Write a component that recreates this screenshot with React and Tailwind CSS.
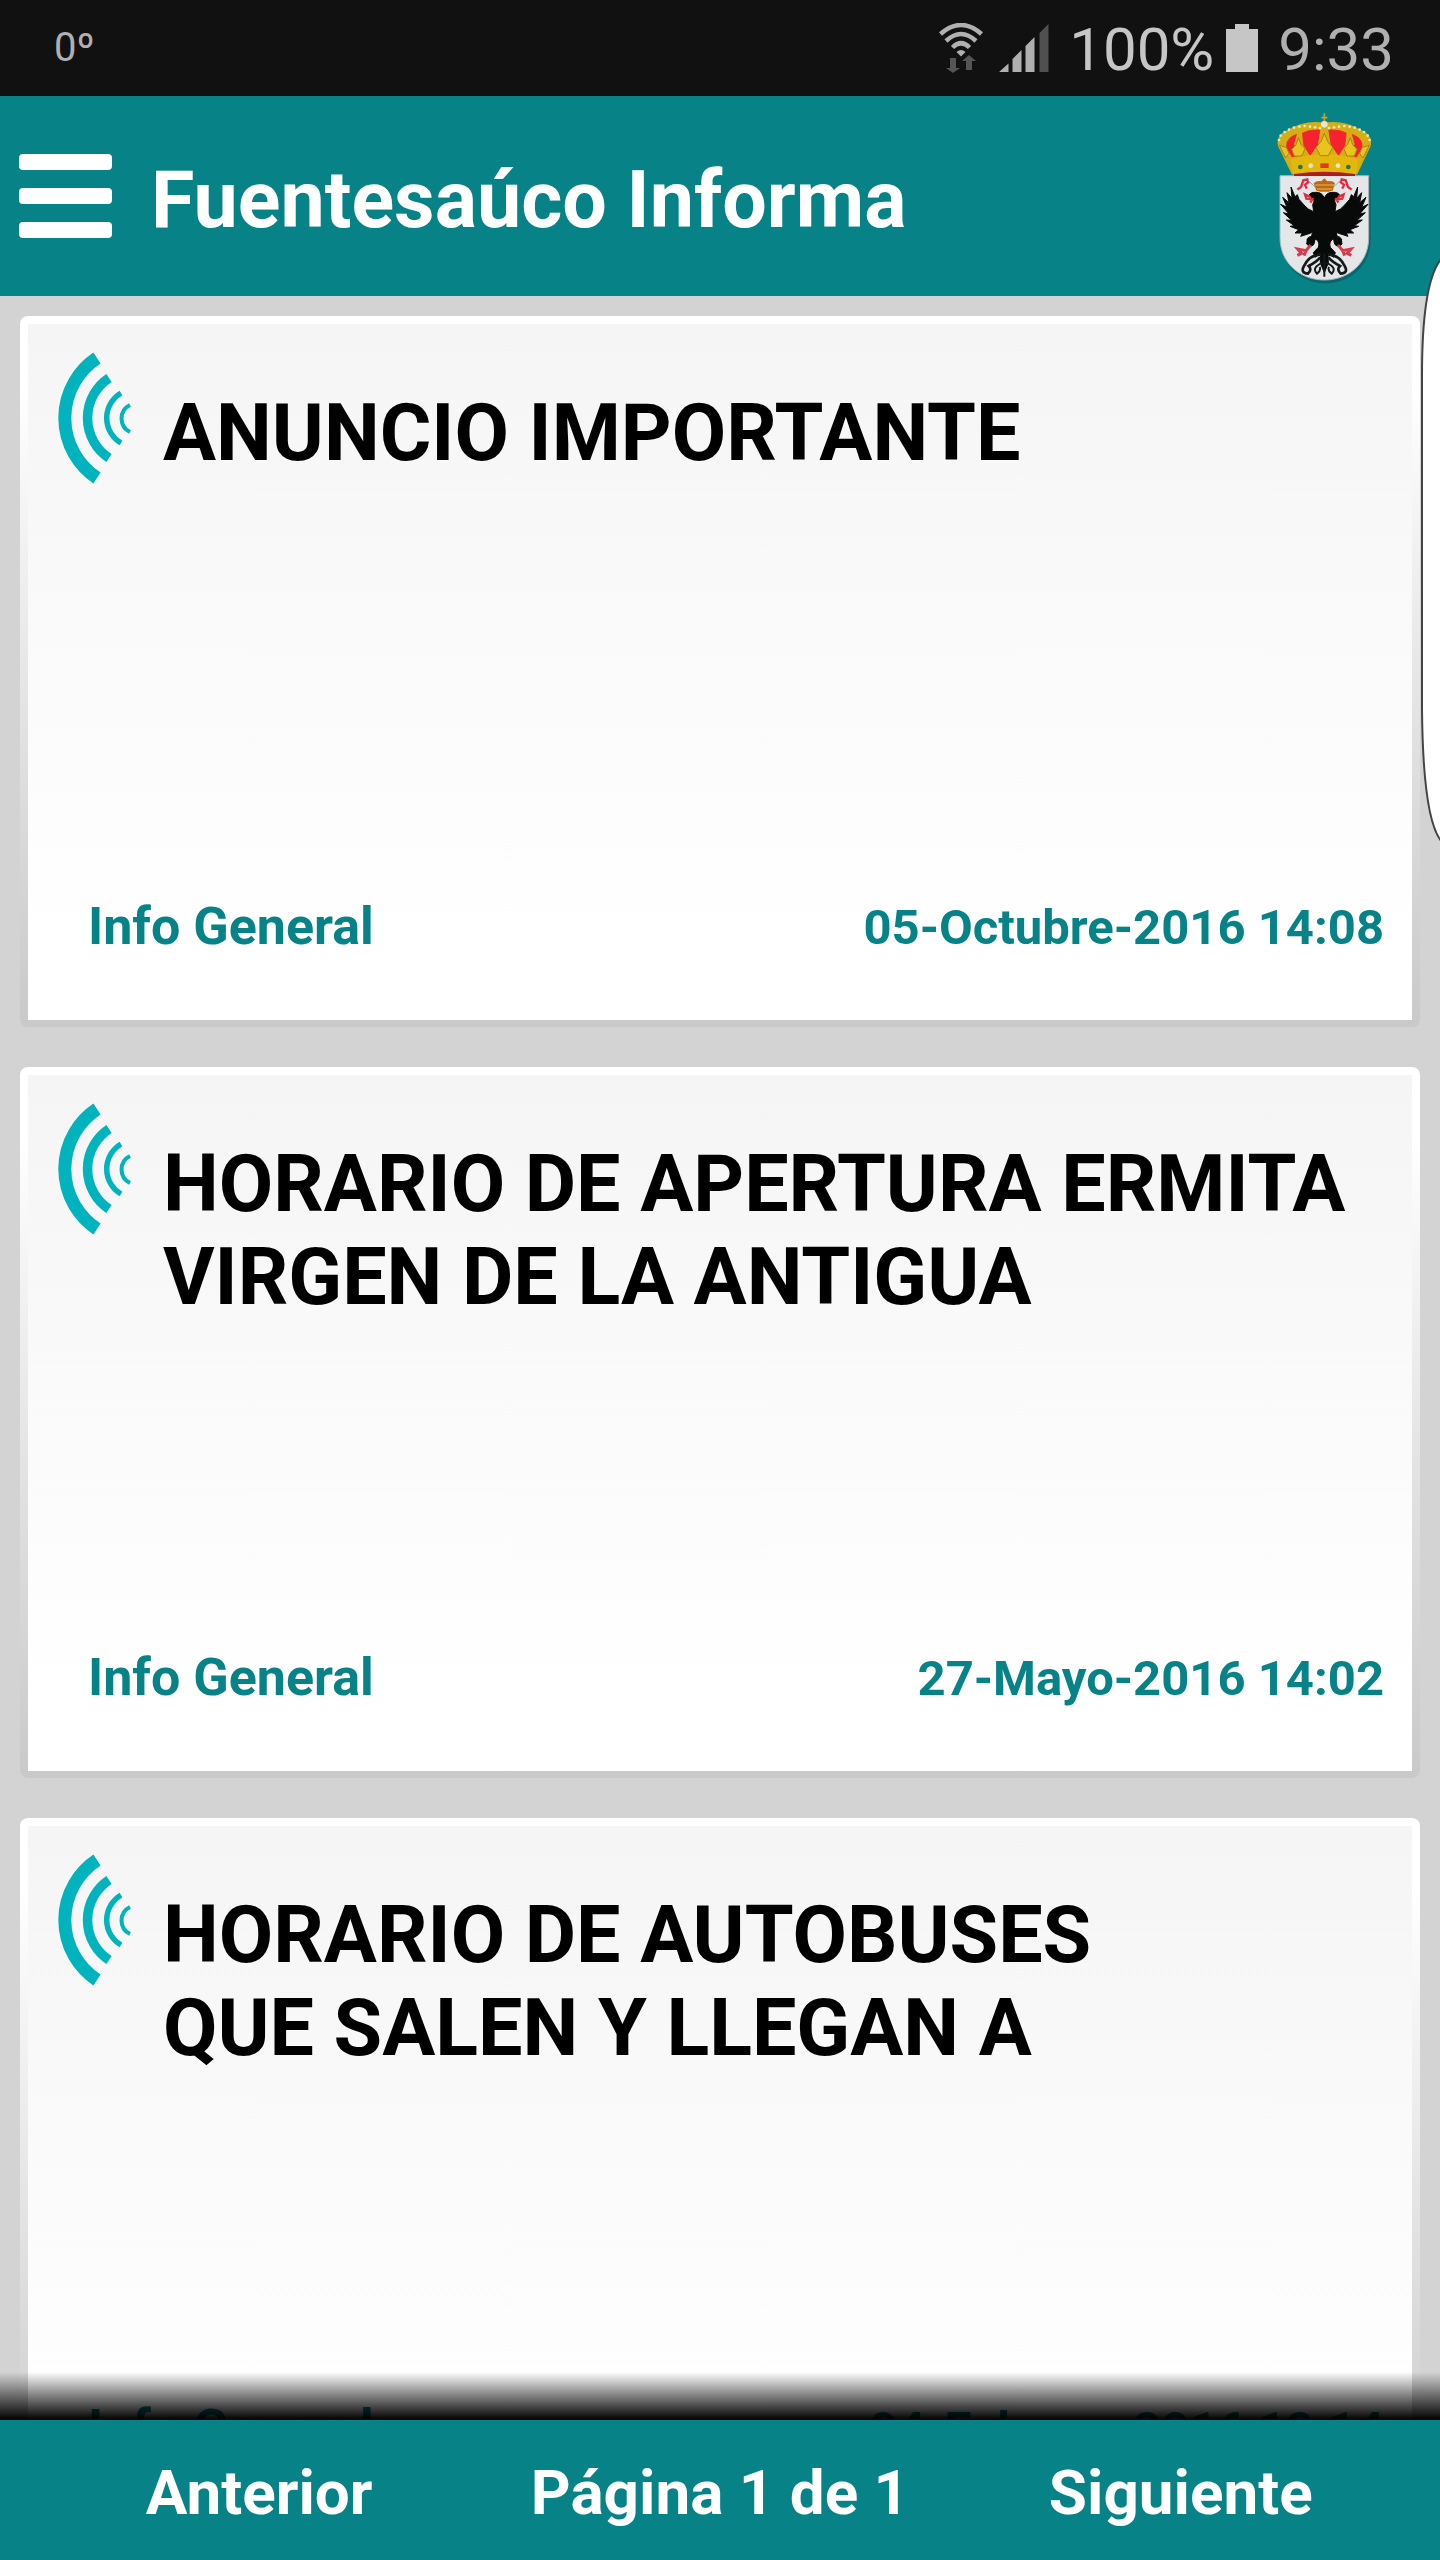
import React from 'react';

const announcements = [
    { id: 1, title: 'ANUNCIO IMPORTANTE', category: 'Info General', date: '05-Octubre-2016 14:08' },
    { id: 2, title: 'HORARIO DE APERTURA ERMITA VIRGEN DE LA ANTIGUA', category: 'Info General', date: '27-Mayo-2016 14:02' },
    { id: 3, title: 'HORARIO DE AUTOBUSES\nQUE SALEN Y LLEGAN A', category: 'Info General', date: '04-Febrero-2016 12:14' },
];

const WifiIcon = () => (
    <svg className="w-11 h-[50px]" viewBox="0 0 44 50" fill="none" stroke="#b0b0b0" aria-hidden="true">
        <path d="M1.5 11 Q22 -7 42.5 11" strokeWidth="4.5" />
        <path d="M7 18 Q22 4 37 18" strokeWidth="4.5" />
        <path d="M13.5 24.5 Q22 16 30.5 24.5" strokeWidth="4.5" />
        <path d="M17.5 29 Q22 25 26.5 29 L22 33.5Z" fill="#b0b0b0" stroke="none" />
        <path d="M11 35h6v10h4l-7 5-7-5h4zM27 47V38h-4l7-6 7 6h-4v9z" fill="#555" stroke="none" />
    </svg>
);

const SignalIcon = () => (
    <svg className="w-[50px] h-12" viewBox="0 0 50 48" fill="#b0b0b0" aria-hidden="true">
        <path d="M0 48 L9.500 39.500V48z M13.500 35 L22.500 26V48H13.500z M26.500 22 L35.500 13V48H26.500z" />
        <path d="M40.500 9 L49.500 0V48H40.500z" fill="#505050" />
    </svg>
);

const BatteryIcon = () => (
    <svg className="w-8 h-12" viewBox="0 0 32 48" fill="#c6c6c6" aria-hidden="true">
        <path d="M9 0h14v5h9v43H0V5h9z" />
    </svg>
);

const WavesIcon = () => (
    <svg className="w-[75px] h-[140px] shrink-0" viewBox="0 0 75 140" fill="none" stroke="#00b3bc" aria-hidden="true">
        <path d="M41 10 A72 72 0 0 0 41 130" strokeWidth="13" />
        <path d="M53 30 A48 48 0 0 0 53 110" strokeWidth="9.500" />
        <path d="M65 45 A29 29 0 0 0 65 95" strokeWidth="5.500" />
        <path d="M74 57 A15 15 0 0 0 74 84" strokeWidth="4" />
    </svg>
);

const CoatOfArms = () => (
    <svg className="w-[100px] h-[175px]" viewBox="100 45 300 525" role="img" aria-label="Escudo de Fuentesaúco">
        {/* Shield */}
        <path d="M122 244H390V432C390 508 330 562 255 562S120 508 122 432Z" fill="#045b60" opacity=".7" />
        <path d="M118 239H384V425C384 500 325 552 251 552S118 500 118 425Z" fill="#e4e6e8" stroke="#a9b4b6" strokeWidth="3" />

        {/* Crown */}
        <path d="M153 234 L112 150 Q105 118 140 103 Q190 72 251 80 Q312 72 362 103 Q397 118 390 150 L350 234Z" fill="#d5ae13" />
        <path d="M137 155 Q133 126 169 113 L160 145 L181 177 L154 184Z M184 111 Q206 99 239 101 L232 146 L208 180 L188 147Z M318 111 Q296 99 263 101 L270 146 L294 180 L314 147Z M365 155 Q369 126 333 113 L342 145 L321 177 L348 184Z" fill="#f4232d" />
        <path d="M150 190 Q251 160 352 190 L347 236 H156Z" fill="#e4b70d" />
        <path d="M160 234 Q251 220 343 234 V240H160Z" fill="#a91e18" />
        <path d="M251 52v47M242 65h18" stroke="#c5a228" strokeWidth="5" />
        <g fill="#e8c51c" stroke="#a98218" strokeWidth="3">
            <path d="M251 112 l10 25 15 17 -13 25 h-24 l-13 -25 15 -17z" />
            <path d="M173 125 l8 20 12 13 -10 22 h-22 l-8 -20 13 -14z" />
            <path d="M329 125 l-8 20 -12 13 10 22 h22 l8 -20 -13 -14z" />
            <path d="M116 148 l21 6 8 18 -10 14z M386 148 l-21 6 -8 18 10 14z" />
        </g>
        <g fill="#e4e6cd">
            {[[115, 132], [120, 119], [132, 108], [145, 101], [160, 95], [176, 92], [192, 90], [208, 92], [223, 94], [238, 96], [265, 96], [280, 94], [295, 92], [311, 90], [327, 92], [342, 95], [357, 101], [370, 108], [381, 119], [387, 132]].map(([x, y]) => (
                <circle key={x} cx={x} cy={y} r="4" />
            ))}
            <circle cx="251" cy="85" r="10" />
            <circle cx="210" cy="209" r="7" />
            <circle cx="292" cy="209" r="7" />
        </g>
        <path d="M239 202h25v14h-25z" fill="#dd3b19" />
        <circle cx="179" cy="213" r="7" fill="#22783c" />
        <circle cx="323" cy="213" r="7" fill="#22783c" />

        {/* Small crown and keys */}
        <path d="M227 284 L219 262 Q229 253 242 256 L251 247 L260 256 Q275 253 283 262 L276 284Q251 291 227 284Z" fill="#b86b17" />
        <path d="M224 267h56M229 279h45" stroke="#e29a34" strokeWidth="4" />
        <path d="M170 281l11-8 7-20 12-3 3 9 -10 7 5 12M333 281l-11-8-7-20-12-3-3 9 10 7-5 12" fill="none" stroke="#e52a40" strokeWidth="7" />
        <path d="M203 253l20 20M299 253l-20 20" stroke="#aaa" strokeWidth="3" />

        {/* Double headed eagle */}
        <g fill="#080909" stroke="#080909" strokeWidth="3">
            <path d="M251 306 Q244 288 225 289 Q208 288 203 301 L218 305 Q223 315 216 326 L219 347 Q201 341 190 327 L175 310 L170 296 L163 302 L151 273 L154 307 L139 290 L145 320 L126 304 L139 334 L120 325 L145 354 L128 350 L153 373 L137 372 L161 389 L148 391 L174 401 L163 411 L185 411 L180 421 L202 414 L216 409 Q210 433 199 431 L207 445 L226 430 Q238 437 233 454 L218 470 L223 484 L240 472 L239 501 L251 530 L263 501 L262 472 L279 484 L284 470 L269 454 Q264 437 276 430 L295 445 L303 431 Q292 433 286 409 L300 414 L322 421 L317 411 L339 411 L328 401 L354 391 L341 389 L365 372 L349 373 L374 350 L357 354 L382 325 L363 334 L376 304 L357 320 L363 290 L348 307 L351 273 L339 302 L332 296 L327 310 L312 327 Q301 341 283 347 L286 326 Q279 315 284 305 L299 301 Q294 288 277 289 Q258 288 251 306Z" />
            <path d="M200 430 Q204 418 216 424 Q227 434 218 447 Q207 455 198 444Z M302 430 Q298 418 286 424 Q275 434 284 447 Q295 455 304 444Z" />
        </g>
        <g fill="none" stroke="#15191a" strokeWidth="8">
            <path d="M240 475 Q205 477 190 510 Q178 531 202 533 Q215 520 204 510 Q228 497 239 484 M262 475 Q297 477 312 510 Q324 531 300 533 Q287 520 298 510 Q274 497 263 484" />
            <path d="M251 473V542M245 500Q211 516 229 533Q242 523 237 513M257 500Q291 516 273 533Q260 523 265 513" strokeWidth="6" />
        </g>
        <path d="M210 303l-17-8 4 13 18 2-6 10M292 303l17-8-4 13-18 2 6 10" fill="none" stroke="#d73342" strokeWidth="7" />
        <path d="M210 447l-14 17-25-5 11 13-12 6M196 464l-6 15M292 447l14 17 25-5-11 13 12 6M306 464l6 15" fill="none" stroke="#d73a4c" strokeWidth="9" />
    </svg>
);

const StatusBar = () => (
    <div className="h-24 shrink-0 bg-[#111] flex items-center justify-between pl-[54px] pr-[46px] text-[60px] leading-none">
        <span className="text-[40px] text-[#b0b0b0]">0º</span>
        <div className="flex items-center">
            <WifiIcon />
            <div className="ml-4 mr-5"><SignalIcon /></div>
            <span className="pt-1 text-[#c6c6c6]">100%</span>
            <div className="ml-3 mr-5"><BatteryIcon /></div>
            <span className="pt-1 text-[#b0b0b0]">9:33</span>
        </div>
    </div>
);

const AnnouncementCard = ({ item }) => (
    <article className="rounded-lg p-2 pb-[7px] bg-linear-to-b from-white from-10% to-[#c9c9c9]">
        <div className="h-[696px] flex flex-col justify-between bg-linear-to-b from-[#f5f5f5] to-white to-90% pt-6 pb-[62px]">
            <div className="flex items-start px-7 gap-8">
                <WavesIcon />
                <h2 className="pt-[39px] text-[79px] leading-[93px] font-bold text-black whitespace-pre-line">{item.title}</h2>
            </div>
            <div className="flex items-baseline justify-between pl-[60px] pr-7 font-bold text-[#078388] leading-[60px]">
                <span className="text-[52px]">{item.category}</span>
                <time className="text-[49px]">{item.date}</time>
            </div>
        </div>
    </article>
);

const App = () => {
    return (
        <div className="relative h-screen flex flex-col overflow-hidden bg-[#d3d3d3] font-['Roboto',sans-serif]">
            <StatusBar />

            <header className="h-[200px] shrink-0 bg-[#078388] flex items-center justify-between pl-[19px] pr-[66px]">
                <div className="flex items-center gap-[39px]">
                    <button aria-label="Menú" className="flex flex-col gap-[18px]">
                        <span className="w-[93px] h-4 rounded-sm bg-white" />
                        <span className="w-[93px] h-4 rounded-sm bg-white" />
                        <span className="w-[93px] h-4 rounded-sm bg-white" />
                    </button>
                    <h1 className="pt-2 text-[79px] leading-[93px] font-bold text-white">Fuentesaúco Informa</h1>
                </div>
                <div className="pt-1"><CoatOfArms /></div>
            </header>

            {/* Announcement list */}
            <main className="relative flex-1 min-h-0 overflow-hidden">
                <div className="flex flex-col gap-10 p-5">
                    {announcements.map((item) => (
                        <AnnouncementCard key={item.id} item={item} />
                    ))}
                </div>
                <div className="absolute inset-x-0 bottom-0 h-12 bg-linear-to-b from-transparent to-black" />
            </main>

            {/* Pagination */}
            <nav className="h-[140px] shrink-0 bg-[#078388] grid grid-cols-[36%_28%_36%] items-center pt-1 text-center text-[62px] font-bold text-white whitespace-nowrap">
                <button>Anterior</button>
                <span>Página 1 de 1</span>
                <button>Siguiente</button>
            </nav>

            {/* Edge panel handle */}
            <svg className="absolute right-0 top-[256px] w-5 h-[588px]" viewBox="0 0 20 588" aria-hidden="true">
                <path d="M22 2 Q2 24 2 119 V453 Q3 565 22 586" fill="#fff" stroke="#444" strokeWidth="2" />
            </svg>
        </div>
    );
};

export default App;
